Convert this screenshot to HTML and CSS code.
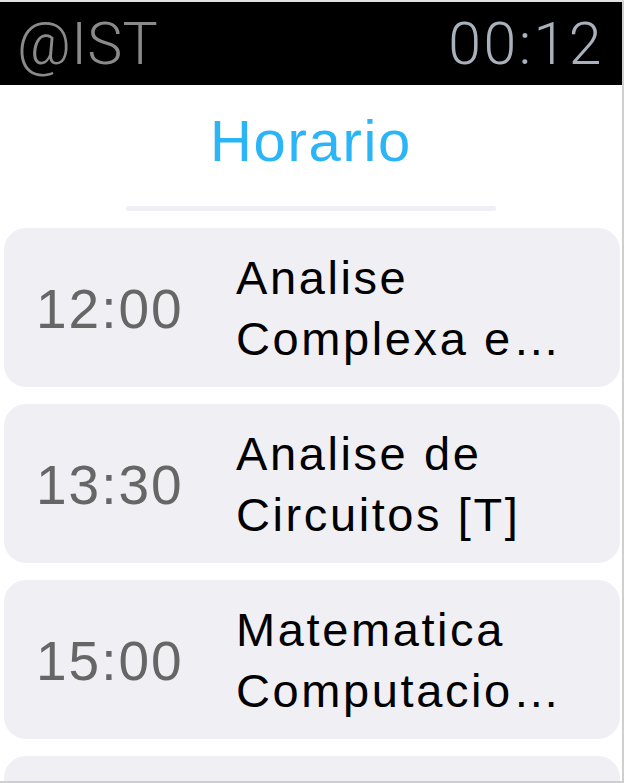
FILE: index.html
```html
<!DOCTYPE html>
<html>
<head>
<meta charset="utf-8">
<link rel="stylesheet" href="styles.css">
</head>
<body>
<div class="screen">
  <header class="status">
    <span class="carrier">@IST</span>
    <span class="clock">00:12</span>
  </header>
  <div class="title-area">
    <h1 class="title">Horario</h1>
    <div class="separator"></div>
  </div>
  <div class="list">
    <div class="card">
      <div class="time">12:00</div>
      <div class="subject">Analise Complexa e…</div>
    </div>
    <div class="card">
      <div class="time">13:30</div>
      <div class="subject">Analise de Circuitos [T]</div>
    </div>
    <div class="card">
      <div class="time">15:00</div>
      <div class="subject">Matematica Computacio…</div>
    </div>
    <div class="card"></div>
  </div>
</div>
</body>
</html>
```
FILE: styles.css
```css
html, body {
  margin: 0;
  padding: 0;
  background: #ffffff;
  overflow: hidden;
}
.screen {
  width: 622px;
  height: 779px;
  border-top: 2px solid #e2e2e2;
  border-right: 2px solid #cfcfcf;
  border-bottom: 2px solid #cfcfcf;
  overflow: hidden;
  font-family: "Liberation Sans", Arial, sans-serif;
  background: #fff;
}
.status {
  height: 83px;
  background: #000;
  display: flex;
  align-items: center;
  justify-content: space-between;
  padding: 0 18px 0 17px;
  font-family: Roboto, "Liberation Sans", sans-serif;
  font-size: 59px;
  font-weight: 300;
  line-height: 1;
}
.carrier {
  color: #8a8a8a;
  letter-spacing: 0.3px;
}
.clock {
  color: #a9b1bc;
  letter-spacing: 2.5px;
}
.title-area {
  height: 143px;
  display: flex;
  flex-direction: column;
  align-items: center;
}
.title {
  margin: 0;
  margin-top: 24px;
  font-size: 58px;
  font-weight: 400;
  line-height: 64px;
  color: #2bb5f7;
  letter-spacing: 1.7px;
}
.separator {
  margin-top: 33px;
  width: 370px;
  height: 5px;
  border-radius: 3px;
  background: #efeff4;
}
.list {
  display: flex;
  flex-direction: column;
  gap: 17px;
  padding: 0 2px 0 4px;
}
.card {
  height: 159px;
  flex: none;
  background: #efeff4;
  border-radius: 22px;
  display: flex;
  align-items: center;
  padding-left: 32px;
  box-sizing: border-box;
}
.time {
  width: 200px;
  flex: none;
  font-size: 55px;
  color: #666666;
  letter-spacing: 2px;
  padding-top: 3px;
}
.subject {
  flex: 1;
  max-width: 360px;
  font-size: 47px;
  line-height: 61px;
  color: #000;
  letter-spacing: 2.6px;
}
```
